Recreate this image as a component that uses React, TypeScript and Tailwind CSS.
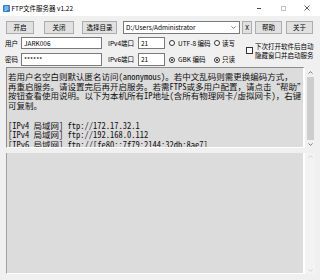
import React from "react";

const Btn = ({ className, children }: { className: string; children: React.ReactNode }) => (
  <div
    className={`h-full shrink-0 border border-[#adadad] bg-[#e1e1e1] flex items-center justify-center text-[6.5px] leading-none whitespace-nowrap ${className}`}
  >
    {children}
  </div>
);

const Radio = ({ checked }: { checked?: boolean }) => (
  <span className="w-[6px] h-[6px] shrink-0 rounded-full border border-[#333] bg-white flex items-center justify-center">
    {checked && <span className="w-[2px] h-[2px] rounded-full bg-[#222]" />}
  </span>
);

const Chev = ({ up, color }: { up?: boolean; color: string }) => (
  <svg width="5" height="3" viewBox="0 0 5 3">
    <path
      d={up ? "M0.5 2.6 L2.5 0.6 L4.5 2.6" : "M0.5 0.4 L2.5 2.4 L4.5 0.4"}
      fill="none"
      stroke={color}
      strokeWidth="0.8"
    />
  </svg>
);

const lines1 = [
  "若用户名空白则默认匿名访问(anonymous)。若中文乱码则需更换编码方式，",
  "再重启服务。请设置完后再开启服务。若需FTPS或多用户配置，请点击“帮助”",
  "按钮查看使用说明。以下为本机所有IP地址(含所有物理网卡/虚拟网卡)，右键",
  "可复制。",
  " ",
  "[IPv4 局域网] ftp://172.17.32.1",
  "[IPv4 局域网] ftp://192.168.0.112",
  "[IPv6 局域网] ftp://[fe80::7f79:2144:32db:8ae7]",
];

export default function App() {
  return (
    <div className="w-[320px] h-[280px] bg-[#f0f0f0] flex flex-col overflow-hidden text-black font-['Noto_Sans_CJK_SC',sans-serif]">
      {/* title bar */}
      <div className="h-[16px] bg-white flex items-center shrink-0">
        <svg className="ml-[3px] shrink-0" width="7" height="7" viewBox="0 0 7 7">
          <rect x="0" y="0" width="7" height="7" rx="1" fill="#2b7fd6" />
          <rect x="1.5" y="1.5" width="4" height="1" fill="#cfe6ff" />
          <rect x="1.5" y="3.5" width="4" height="1" fill="#cfe6ff" />
          <rect x="1.5" y="5.2" width="2" height="0.8" fill="#cfe6ff" />
        </svg>
        <span className="ml-[1.5px] text-[6.5px] leading-none whitespace-nowrap">FTP文件服务器 v1.22</span>
        <div className="ml-auto flex h-full pr-[1px]">
          <div className="w-[24px] h-full flex items-center justify-center">
            <span className="w-[4px] h-[1px] bg-[#444]" />
          </div>
          <div className="w-[24px] h-full flex items-center justify-center">
            <span className="w-[5px] h-[5px] border border-[#c4c4c4]" />
          </div>
          <div className="w-[24px] h-full flex items-center justify-center">
            <svg width="6" height="6" viewBox="0 0 6 6">
              <path d="M0.5 0.5 L5.5 5.5 M5.5 0.5 L0.5 5.5" stroke="#333" strokeWidth="0.8" />
            </svg>
          </div>
        </div>
      </div>

      {/* row 1 */}
      <div className="flex h-[13px] mt-[5px] pl-[6px] shrink-0">
        <Btn className="w-[28px]">开启</Btn>
        <Btn className="w-[30px] ml-[10px]">关闭</Btn>
        <Btn className="w-[35px] ml-[8px]">选择目录</Btn>
        <div className="w-[117px] ml-[6px] h-full border border-[#7a7a7a] bg-white flex items-center pl-[2px] pr-[3px] text-[6.5px] leading-none whitespace-nowrap">
          <span>D:/Users/Administrator</span>
          <span className="ml-auto">
            <Chev color="#555" />
          </span>
        </div>
        <Btn className="w-[10px] ml-[2px]">X</Btn>
        <Btn className="w-[27px] ml-[3px]">帮助</Btn>
        <Btn className="w-[27px] ml-[4px]">关于</Btn>
      </div>

      {/* rows 2-3 */}
      <div className="flex mt-[3px] h-[29px] shrink-0 text-[6.5px] leading-none whitespace-nowrap">
        <div className="w-[246px] flex flex-col">
          <div className="flex items-center h-[12px]">
            <span className="w-[21px] shrink-0 pl-[5px]">用户</span>
            <div className="w-[81px] shrink-0 h-full border border-[#7a7a7a] bg-white flex items-center pl-[2px]">JARK006</div>
            <span className="w-[36px] shrink-0 pl-[6px]">IPv4端口</span>
            <div className="w-[27px] shrink-0 h-full border border-[#7a7a7a] bg-white flex items-center pl-[2px]">21</div>
            <div className="w-[49px] shrink-0 pl-[4px] flex items-center">
              <Radio />
              <span className="ml-[3px]">UTF-8 编码</span>
            </div>
            <div className="flex items-center">
              <Radio />
              <span className="ml-[2px]">读写</span>
            </div>
          </div>
          <div className="flex items-center h-[13px] mt-[4px]">
            <span className="w-[21px] shrink-0 pl-[5px]">密码</span>
            <div className="w-[81px] shrink-0 h-full border border-[#7a7a7a] bg-white flex items-center pl-[2px]">******</div>
            <span className="w-[36px] shrink-0 pl-[6px]">IPv6端口</span>
            <div className="w-[27px] shrink-0 h-full border border-[#7a7a7a] bg-white flex items-center pl-[2px]">21</div>
            <div className="w-[49px] shrink-0 pl-[4px] flex items-center">
              <Radio checked />
              <span className="ml-[3px]">GBK 编码</span>
            </div>
            <div className="flex items-center">
              <Radio checked />
              <span className="ml-[2px]">只读</span>
            </div>
          </div>
        </div>
        <div className="flex items-center pb-[2px]">
          <span className="w-[7px] h-[7px] border border-[#333] bg-white shrink-0" />
          <div className="ml-[2px] flex flex-col gap-[3px]">
            <span>下次打开软件后自动</span>
            <span>隐藏窗口并启动服务</span>
          </div>
        </div>
      </div>

      {/* text area 1 */}
      <div className="mt-[1px] ml-[6px] mr-[5px] h-[81px] flex shrink-0">
        <div className="flex-1 min-w-0 bg-[#dcdcdc] border-l border-t border-[#8c8c8c] border-r-2 border-r-white border-b border-b-white overflow-hidden pl-[1px] pt-[4px] font-['Noto_Sans_Mono_CJK_SC','Noto_Sans_CJK_SC',monospace] text-[8.5px] leading-[9.7px] text-[#111]">
          {lines1.map((l, i) => (
            <div key={i} className="whitespace-pre">
              {l}
            </div>
          ))}
        </div>
        <div className="w-[10px] bg-[#f0f0f0] flex flex-col items-center">
          <div className="h-[10px] flex items-center justify-center">
            <Chev up color="#606060" />
          </div>
          <div className="flex-1 w-[7px] bg-[#cdcdcd]" />
          <div className="h-[8px] flex items-center justify-center">
            <Chev color="#606060" />
          </div>
        </div>
      </div>

      {/* text area 2 */}
      <div className="mt-[5px] ml-[6px] mr-[5px] h-[121px] flex shrink-0">
        <div className="flex-1 bg-[#dcdcdc] border-l border-[#a0a0a0] border-r-2 border-r-white border-b border-b-white" />
        <div className="w-[10px] bg-[#f3f3f3] flex flex-col items-center justify-between py-[2px]">
          <Chev up color="#c8c8c8" />
          <Chev color="#c8c8c8" />
        </div>
      </div>
    </div>
  );
}
